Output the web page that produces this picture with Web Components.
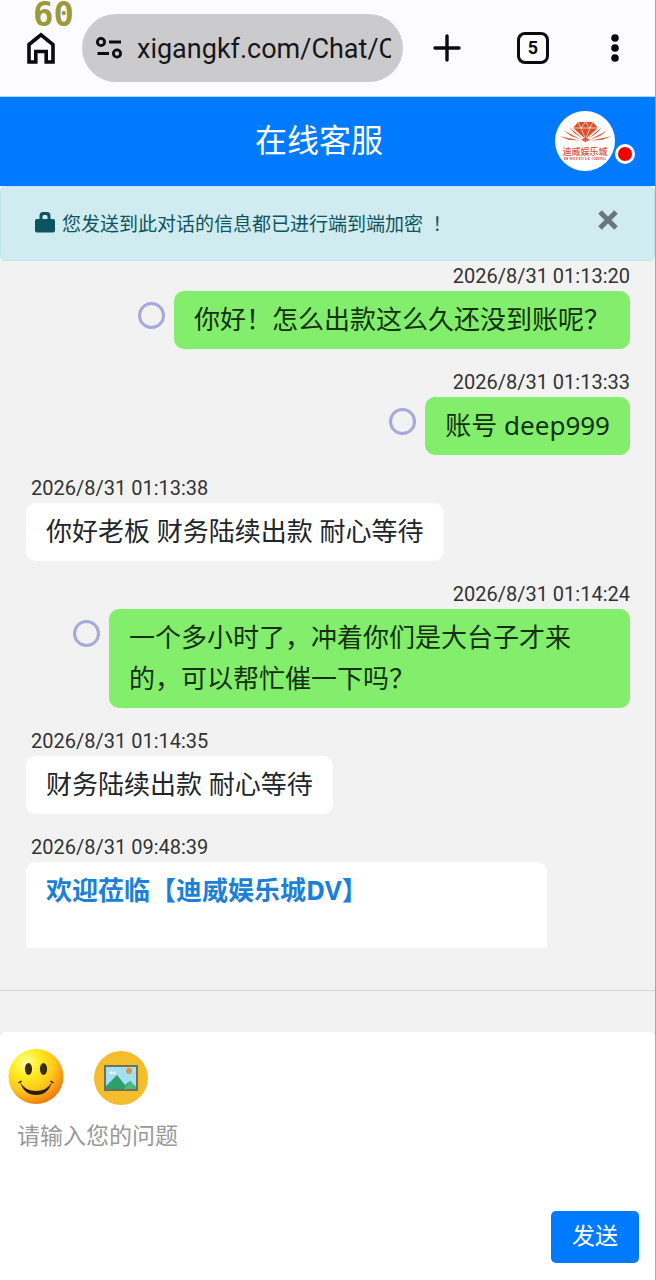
<!DOCTYPE html>
<html lang="zh-CN">
<head>
<meta charset="utf-8">
<meta name="viewport" content="width=device-width, initial-scale=1">
<title>在线客服</title>
<style>
  html, body { margin: 0; height: 100%; }
  body { font-family: Roboto, "Noto Sans CJK SC", sans-serif; background: #f2f2f2; color: #212529; }
</style>
</head>
<body>
<support-app></support-app>
<script>
const define = (name, html, setup) => {
  const template = document.createElement('template');
  template.innerHTML = `<style>
    *, :host { box-sizing: border-box; }
    button { font: inherit; color: inherit; background: none; border: 0; padding: 0; margin: 0; cursor: pointer; }
    svg { display: block; }
  </style>` + html;
  customElements.define(name, class extends HTMLElement {
    constructor() {
      super();
      this.attachShadow({ mode: 'open' }).append(template.content.cloneNode(true));
    }
    connectedCallback() { if (setup) setup(this, this.shadowRoot); }
  });
};

define('fps-counter', `<style>
  :host { position: absolute; top: 0; left: 33px; font: bold 34px/28px "DejaVu Sans Mono", monospace; color: #9a9a3c; pointer-events: none; }
</style><slot></slot>`);

define('browser-bar', `<style>
  :host { display: flex; align-items: center; height: 97px; padding: 0 28px 0 24px; background: #fcfcff; color: #0b0b0e; border-bottom: 1px solid #a9dcfb; }
  .url { display: flex; align-items: center; gap: 13px; flex: 1; min-width: 0; height: 68px; margin: 0 28px 0 24px; padding: 0 12px 0 14px; border-radius: 34px; background: #cbcbcd; }
  input { flex: 1; min-width: 0; border: 0; padding: 2px 0 0; margin: 0; outline: 0; background: none; font: 27px/34px Roboto, sans-serif; color: #17171a; }
  .tabs { margin: 0 54px; }
  .tabs span { display: grid; place-items: center; width: 32px; height: 32px; border: 3px solid; border-radius: 8px; font: bold 18px/20px Roboto, sans-serif; }
</style>
<button aria-label="主页"><svg width="34" height="36" viewBox="0 0 34 36" fill="none" stroke="currentColor" stroke-width="3.6"><path d="M5 14.5 17 4.8 29 14.5V32H22.2V21.5H11.8V32H5Z"/></svg></button>
<div class="url">
  <svg width="28" height="26" viewBox="0 0 28 26" fill="none" stroke="currentColor" stroke-width="2.8"><circle cx="5" cy="7" r="3.6"/><path d="M13 7H25M1.500 18.500H13"/><circle cx="21" cy="18.500" r="3.6"/></svg>
  <input aria-label="网址" value="xigangkf.com/Chat/C">
</div>
<button aria-label="新标签页"><svg width="32" height="32" viewBox="0 0 32 32" fill="none" stroke="currentColor" stroke-width="3.4" stroke-linecap="round"><path d="M16 4V28M4 16H28"/></svg></button>
<button class="tabs" aria-label="标签页"><span>5</span></button>
<button aria-label="菜单"><svg width="24" height="32" viewBox="0 0 24 32" fill="currentColor"><circle cx="12" cy="6" r="3.8"/><circle cx="12" cy="16" r="3.8"/><circle cx="12" cy="26" r="3.8"/></svg></button>`);

define('agent-avatar', `<style>
  :host { display: block; position: relative; width: 60px; height: 60px; }
  .online { position: absolute; right: -20px; bottom: 7px; width: 20px; height: 20px; border: 3px solid #fff; border-radius: 50%; background: #f00000; }
</style>
<svg width="60" height="60" viewBox="0 0 60 60" role="img" aria-label="迪威娱乐城">
  <circle cx="30" cy="30" r="30" fill="#fff"/>
  <path fill="#d9502c" d="M23 11H38L43 17 30.5 28 18 17Z"/>
  <path stroke="#fff" stroke-width=".7" fill="none" d="M18 17H43M23 11 26 17 30.5 28 35 17 38 11M26 17 30.5 11 35 17"/>
  <g fill="#d9633e"><path d="M4 25 25 29.500 14 29Z"/><path d="M8 19 27 29 16 25Z"/><path d="M14 16 28.500 28 19 22Z"/><path d="M57 25 36 29.500 47 29Z"/><path d="M53 19 34 29 45 25Z"/><path d="M47 16 32.500 28 42 22Z"/><path d="M26 29 30.500 26 35 29 30.500 31Z"/></g>
  <text x="30" y="44" text-anchor="middle" font-family="Noto Sans CJK SC, sans-serif" font-size="9" font-weight="500" fill="#d9502c">迪威娱乐城</text>
  <text x="30" y="49" text-anchor="middle" font-family="Liberation Serif, serif" font-size="4" font-weight="bold" fill="#c8452c">DI WEI YU LE CHENG</text>
</svg>
<span class="online"></span>`);

define('chat-header', `<style>
  :host { display: flex; align-items: center; height: 89px; padding: 0 40px 2px 83px; background: #007bff; color: #fff; }
  h1 { flex: 1; margin: 0; font-size: 32px; line-height: 48px; font-weight: 400; text-align: center; }
</style><h1><slot></slot></h1><agent-avatar></agent-avatar>`);

define('secure-notice', `<style>
  :host { display: flex; align-items: center; height: 75px; padding: 0 35px 0 34px; border: 1px solid #bee5eb; border-radius: 6px; background: #d1ecf1; color: #0c5460; font-size: 19px; line-height: 30px; }
  svg { margin-bottom: 4px; }
  .text { flex: 1; margin-left: 7px; }
  button { color: #68777a; margin-bottom: 4px; }
</style>
<svg width="20" height="22" viewBox="0 0 20 22"><path fill="#0c5460" d="M2 8H4.500V5Q4.500 1 8 1H12Q15.500 1 15.500 5V8H18Q20 8 20 10V19.500Q20 21.500 18 21.500H2Q0 21.500 0 19.500V10Q0 8 2 8ZM7.500 8H12.500V5.500Q12.500 4 11 4H9Q7.500 4 7.500 5.500Z"/></svg>
<span class="text"><slot></slot></span>
<button aria-label="关闭"><svg width="22" height="22" viewBox="0 0 22 22" fill="none" stroke="currentColor" stroke-width="5"><path d="M3 3 19 19M19 3 3 19"/></svg></button>`,
  host => host.addEventListener('click', e => { if (e.composedPath().some(n => n.tagName === 'BUTTON')) host.remove(); }));

define('chat-message', `<style>
  :host { display: flex; flex-direction: column; align-items: flex-start; margin-bottom: 18px; }
  time { padding-left: 5px; font-size: 20px; line-height: 30px; color: #333; }
  .row { display: flex; align-items: flex-start; width: 100%; gap: 9px; }
  .bubble { max-width: calc(100% - 83px); padding: 8px 20px 9px; border-radius: 10px; background: #fff; font: 26px/41px "Noto Sans", "Noto Sans CJK SC", sans-serif; color: #212529; }
  .status { display: none; flex: none; width: 27px; height: 27px; margin-top: 11px; border: 3px solid #a6a8df; border-radius: 50%; }
  :host([mine]) { align-items: flex-end; }
  :host([mine]) time { padding: 0; }
  :host([mine]) .row { justify-content: flex-end; }
  :host([mine]) .status { display: block; }
  :host([mine]) .bubble { background: #82ee6c; color: #14300f; }
  :host([wide]) .bubble { flex: 1; min-height: 180px; font-weight: 700; color: #1c7fd8; }
</style>
<time></time>
<div class="row"><span class="status"></span><div class="bubble"><slot></slot></div></div>`,
  (host, root) => { root.querySelector('time').textContent = host.getAttribute('time'); });

define('message-list', `<style>
  :host { display: block; overflow: hidden; padding: 0 25px 0 26px; }
</style><slot></slot>`);

define('message-composer', `<style>
  :host { display: block; margin-top: 42px; border-top: 1px solid #d5d5d5; padding-top: 41px; }
  form { margin: 0; display: flex; flex-direction: column; padding: 17px 16px 17px 8px; border-radius: 6px 6px 0 0; background: #fff; }
  .tools { display: flex; gap: 29px; }
  textarea { display: block; height: 88px; margin: 12px 0 6px; padding: 0 9px; border: 0; outline: 0; resize: none; background: none; font: 23px/34px "Noto Sans CJK SC", sans-serif; color: #333; }
  textarea::placeholder { color: #999; opacity: 1; }
  .send { align-self: flex-end; width: 88px; height: 52px; border-radius: 5px; background: #007bff; color: #fff; font-size: 23px; line-height: 34px; }
</style>
<form onsubmit="return false">
  <div class="tools">
    <button type="button" aria-label="表情"><svg width="56" height="56" viewBox="0 0 56 56">
      <defs><radialGradient id="face" cx=".32" cy=".25" r=".8"><stop offset="0" stop-color="#ffffa0"/><stop offset=".3" stop-color="#ffee22"/><stop offset=".65" stop-color="#ffc71c"/><stop offset="1" stop-color="#f0790f"/></radialGradient></defs>
      <circle cx="28" cy="27.500" r="27.500" fill="url(#face)"/>
      <ellipse cx="20.500" cy="20" rx="3.600" ry="6" fill="#3a2d08"/><ellipse cx="35.500" cy="20" rx="3.600" ry="6" fill="#3a2d08"/>
      <path d="M12 33Q17 42 28 42Q39 42 44 33Q40 46 28 46Q16 46 12 33Z" fill="#2d1d06"/><path d="M10.500 34 13.500 32M42.500 32 45.500 34" stroke="#2d1d06" stroke-width="1.500"/>
    </svg></button>
    <button type="button" aria-label="图片"><svg width="56" height="56" viewBox="0 0 56 56">
      <circle cx="28" cy="29" r="27" fill="#f4bd2d"/>
      <path d="M12 17H44V41H12Z" fill="#a5dff2" stroke="#6c7458" stroke-width="2"/>
      <path d="M13 40V37L24 26 32 36 37 32 43 38V40Z" fill="#2e9e6c"/><path d="M31 40 37 32 43 38V40Z" fill="#4bb784"/>
      <circle cx="36" cy="22" r="3" fill="#dd914c"/><path d="M16 25 18 22 20 24 22 22 23 25Z" fill="#fff"/>
    </svg></button>
  </div>
  <textarea aria-label="请输入您的问题" placeholder="请输入您的问题"></textarea>
  <button class="send" type="submit">发送</button>
</form>`);

define('support-app', `<style>
  :host { display: flex; flex-direction: column; min-height: 100%; height: 100vh; border-right: 1px solid #a5a9ad; background: #f2f2f2; }
  browser-bar, chat-header, secure-notice, message-composer { flex: none; }
  message-list { flex: 1; min-height: 0; }
  .mark { font-family: "Noto Sans CJK TC", sans-serif; }
</style>
<browser-bar></browser-bar>
<fps-counter>60</fps-counter>
<chat-header>在线客服</chat-header>
<secure-notice>您发送到此对话的信息都已进行端到端加密 <span class="mark" lang="zh-TW">！</span></secure-notice>
<message-list>
  <chat-message mine time="2026/8/31 01:13:20">你好！怎么出款这么久还没到账呢？</chat-message>
  <chat-message mine time="2026/8/31 01:13:33">账号 deep999</chat-message>
  <chat-message time="2026/8/31 01:13:38">你好老板 财务陆续出款 耐心等待</chat-message>
  <chat-message mine time="2026/8/31 01:14:24">一个多小时了，冲着你们是大台子才来的，可以帮忙催一下吗？</chat-message>
  <chat-message time="2026/8/31 01:14:35">财务陆续出款 耐心等待</chat-message>
  <chat-message wide time="2026/8/31 09:48:39">欢迎莅临【迪威娱乐城DV】</chat-message>
</message-list>
<message-composer></message-composer>`);
</script>
</body>
</html>
